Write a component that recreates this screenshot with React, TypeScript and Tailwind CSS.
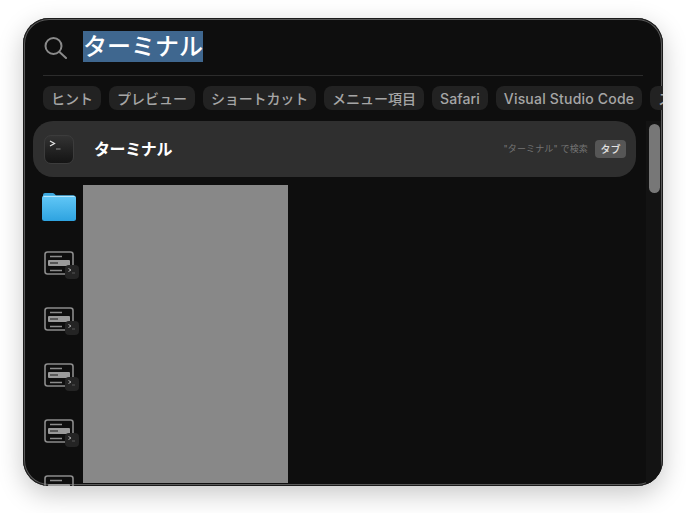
const FONT = "font-['Inter','Noto_Sans_CJK_JP',sans-serif]";

const chips = [
  { label: "ヒント", tracking: "" },
  { label: "プレビュー", tracking: "" },
  { label: "ショートカット", tracking: "tracking-[-0.14px]" },
  { label: "メニュー項目", tracking: "" },
  { label: "Safari", tracking: "tracking-[0.1px]" },
  { label: "Visual Studio Code", tracking: "tracking-[0.2px]" },
  { label: "スクリプト", tracking: "" },
];

function SearchIcon() {
  return (
    <svg width="24" height="24" viewBox="0 0 24 24" fill="none" stroke="#8a8a8a" strokeWidth="2" strokeLinecap="round">
      <circle cx="9.5" cy="11" r="8" />
      <path d="M15.5 17 L22 23" />
    </svg>
  );
}

function TerminalIcon() {
  return (
    <div className="flex h-[29px] w-[30px] rounded-[7px] border border-[#3c3c3c] bg-gradient-to-b from-[#333333] to-[#141414]">
      <svg width="28" height="27" viewBox="0 0 28 27" fill="none">
        <path d="M5 5 L9.5 7.5 L5 10" stroke="#e4e4e4" strokeWidth="1.2" />
        <path d="M11 13 H15.5" stroke="#8a8a8a" strokeWidth="1.2" />
      </svg>
    </div>
  );
}

function FolderIcon() {
  return (
    <svg width="40" height="56" viewBox="0 0 40 56" fill="none">
      <defs>
        <linearGradient id="folderBody" x1="0" y1="0" x2="0" y2="1">
          <stop offset="0" stopColor="#62c8f7" />
          <stop offset="1" stopColor="#2ea3e0" />
        </linearGradient>
      </defs>
      <path d="M1 18 V16 a2 2 0 0 1 2 -2 h7.5 a3 3 0 0 1 2.2 1 l1.3 1.4 h17 a2 2 0 0 1 2 2 v2 H1 Z" fill="#3aa6dd" />
      <rect x="0" y="16.5" width="34" height="25.5" rx="2.5" fill="url(#folderBody)" />
      <path d="M1.5 17.5 H32.5" stroke="#b4e6fc" strokeWidth="1" />
    </svg>
  );
}

function ListIcon() {
  return (
    <svg width="40" height="56" viewBox="0 0 40 56" fill="none">
      <rect x="3" y="17" width="28" height="22" rx="2.5" stroke="#8c8c8c" strokeWidth="1.6" />
      <path d="M8 21.5 H20 M8 35.5 H20" stroke="#8c8c8c" strokeWidth="1.4" />
      <rect x="6" y="25" width="22" height="6" rx="1" fill="#9a9a9a" />
      <path d="M8 28 H16" stroke="#454545" strokeWidth="1.6" />
      <rect x="23" y="30" width="14" height="14" rx="4" fill="#242424" />
      <path d="M26.5 33.5 L29 35 L26.5 36.5" stroke="#c8c8c8" strokeWidth="0.8" />
      <path d="M30 38 H33" stroke="#666666" strokeWidth="0.8" />
    </svg>
  );
}

export default function App() {
  return (
    <div className={`h-[513px] w-[686px] overflow-hidden bg-white pl-[23px] pt-[18px] ${FONT}`}>
      <div className="relative flex h-[468px] w-[640px] flex-col overflow-hidden rounded-[26px] bg-[#0e0e0e] shadow-[inset_0_0_0_1px_#1c1c1c,inset_0_0_0_2px_#5a5a5a,0_8px_26px_rgba(0,0,0,0.22)]">
        <div className="flex h-[57px] shrink-0 items-center pl-[21px]">
          <SearchIcon />
          <span className="ml-[15px] flex h-[31px] items-center bg-[#3f678f] text-[24px] leading-none font-medium text-white">ターミナル</span>
        </div>
        <div className="mx-[20px] h-px shrink-0 bg-[#2c2c2c]" />

        <div className="mt-[10px] flex shrink-0 gap-2 pl-[20px]">
          {chips.map((chip) => (
            <span key={chip.label} className={`flex h-6 shrink-0 items-center rounded-lg bg-[#222222] px-2 text-[14px] font-medium whitespace-nowrap text-[#a6a6a6] ${chip.tracking}`}>
              {chip.label}
            </span>
          ))}
        </div>

        <div className="mt-[11px] ml-[10px] flex h-14 w-[603px] shrink-0 items-center rounded-[20px] bg-[#2f2f2f] pl-[11px] pr-[10px]">
          <TerminalIcon />
          <span className="ml-[20px] text-[16px] font-semibold tracking-[-0.4px] text-white">ターミナル</span>
          <span className="ml-auto text-[9px] tracking-[0.15px] text-[#747474]">"ターミナル" で検索</span>
          <span className="ml-[7px] flex h-[18px] w-[31px] items-center justify-center rounded-[4px] bg-[#565656] text-[10px] font-medium text-[#e2e2e2]">タブ</span>
        </div>

        <div className="mt-[2px] flex min-h-0 flex-1 pl-[19px]">
          <div className="flex w-[41px] shrink-0 flex-col">
            <div className="h-14 shrink-0"><FolderIcon /></div>
            {[0, 1, 2, 3, 4].map((i) => (
              <div key={i} className="h-14 shrink-0"><ListIcon /></div>
            ))}
          </div>
          <div className="mt-[6px] h-[298px] w-[205px] bg-[#888888]" />
        </div>

        <div className="absolute right-[2px] top-[103px] bottom-[2px] w-[15px] bg-[#131313]">
          <div className="ml-[3px] mt-[3px] h-[69px] w-[11px] rounded-full bg-[#777777]" />
        </div>
      </div>
    </div>
  );
}
